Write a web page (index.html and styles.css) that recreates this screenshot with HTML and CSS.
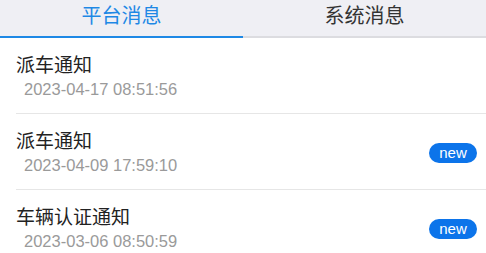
FILE: index.html
```html
<!DOCTYPE html>
<html lang="zh">
<head>
    <meta charset="UTF-8">
    <meta name="viewport" content="width=device-width, initial-scale=1.0">
    <title>消息</title>
    <link rel="stylesheet" href="styles.css">
</head>
<body>

    <div class="tabs">
        <div class="tab active">平台消息</div>
        <div class="tab">系统消息</div>
    </div>

    <div class="msg-list">
        <div class="msg-item">
            <div class="msg-info">
                <h3>派车通知</h3>
                <p>2023-04-17 08:51:56</p>
            </div>
        </div>
        <div class="msg-item">
            <div class="msg-info">
                <h3>派车通知</h3>
                <p>2023-04-09 17:59:10</p>
            </div>
            <span class="badge">new</span>
        </div>
        <div class="msg-item">
            <div class="msg-info">
                <h3>车辆认证通知</h3>
                <p>2023-03-06 08:50:59</p>
            </div>
            <span class="badge">new</span>
        </div>
    </div>

</body>
</html>
```

FILE: styles.css
```css
:root { --blue: #1e88e5; --badge: #0c74ea; --text: #222; --muted: #9a9a9a; --line: #e6e6e6; }
body { margin: 0; font-family: "Noto Sans CJK SC", "Noto Sans", sans-serif; background: #fff; color: var(--text); }

/* TABS */
.tabs { display: flex; background: #efeff4; border-bottom: 2px solid #dcdce0; }
.tab { flex: 1; height: 36px; line-height: 29px; text-align: center; font-size: 20px; color: #333; border-bottom: 2px solid transparent; margin-bottom: -2px; }
.tab.active { color: var(--blue); border-bottom-color: var(--blue); }

/* LIST */
.msg-list { padding-left: 16px; }
.msg-item { display: flex; align-items: center; justify-content: space-between; height: 75px; border-bottom: 1px solid var(--line); padding-right: 9px; }
.msg-info h3 { margin: 0; font-size: 19px; font-weight: normal; line-height: 24px; }
.msg-info p { margin: 2px 0 0 8px; font-size: 16.5px; line-height: 22px; color: var(--muted); font-family: "Liberation Sans", Arial, sans-serif; }

.badge { margin-top: 2px; width: 48px; height: 20px; line-height: 19px; border-radius: 10px; background: var(--badge); color: #fff; text-align: center; font-size: 15px; font-family: "Liberation Sans", Arial, sans-serif; }
```
